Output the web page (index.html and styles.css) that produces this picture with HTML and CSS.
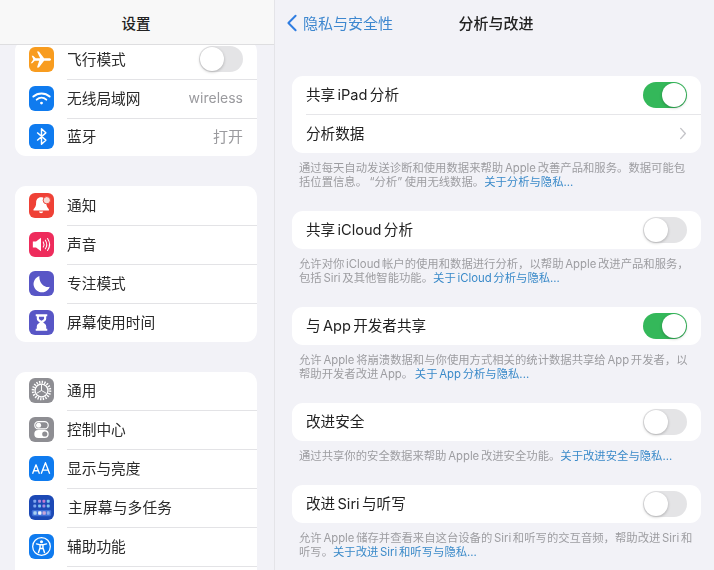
FILE: index.html
```html
<!DOCTYPE html>
<html lang="zh-CN">
<head>
<meta charset="utf-8">
<title>设置</title>
<link rel="stylesheet" href="styles.css">
</head>
<body>
<div class="app">
  <aside class="sidebar">
    <header class="side-head">设置</header>
    <div class="side-scroll">
      <ul class="group">
        <li class="srow"><span class="ico orange"><svg viewBox="0 0 26 26"><path d="M4.500 13l-1.700-4h1.500l2.700 2.700h4.600L8.300 4.800h2l5.400 6.900h5c1.300 0 2.200.6 2.200 1.300s-.9 1.300-2.200 1.300h-5l-5.400 6.900h-2l2.300-6.900H6l-2.700 2.700H1.800z" fill="#fff"/></svg></span><span class="slabel">飞行模式</span><span class="mini-off"><i></i></span></li>
        <li class="srow"><span class="ico blue"><svg viewBox="0 0 26 26" fill="none" stroke="#fff" stroke-linecap="round"><path d="M4.500 11c4.700-4.300 12.300-4.300 17 0" stroke-width="2"/><path d="M8 14.200c2.900-2.600 7.100-2.600 10 0" stroke-width="2"/><circle cx="13" cy="17.800" r="1.500" fill="#fff" stroke="none"/></svg></span><span class="slabel">无线局域网</span><span class="sval">wireless</span></li>
        <li class="srow"><span class="ico blue"><svg viewBox="0 0 26 26" fill="none" stroke="#fff" stroke-width="1.500" stroke-linejoin="round"><path d="M8.500 8.800l9 8-4.500 4.200V5l4.500 4.200-9 8"/></svg></span><span class="slabel">蓝牙</span><span class="sval cjk">打开</span></li>
      </ul>
      <ul class="group">
        <li class="srow"><span class="ico red"><svg viewBox="0 0 26 26"><path d="M12.500 4.500c-3.400 0-5.100 2.600-5.100 5.600 0 3.800-1.200 5-2.700 6.700v1.300h16v-1.300c-1.500-1.700-2.700-2.900-2.700-6.700 0-3-2.100-5.600-5.500-5.600z" fill="#fff"/><path d="M10.300 19.300a2.300 2.300 0 0 0 4.500 0z" fill="#fff"/><circle cx="18.500" cy="7.500" r="3.800" fill="#f7dcd6" stroke="#ef4136"/></svg></span><span class="slabel">通知</span></li>
        <li class="srow"><span class="ico pink"><svg viewBox="0 0 26 26" fill="none" stroke="#fff" stroke-linecap="round" stroke-width="1.100"><path d="M4 10h3.300L12.500 6v14l-5.200-4H4z" fill="#fff" stroke="none"/><path d="M14.800 10.300c1 1.700 1 3.700 0 5.400"/><path d="M17 8.500c1.800 2.800 1.800 6.200 0 9"/><path d="M19.300 6.800c2.600 3.800 2.600 8.600 0 12.400"/></svg></span><span class="slabel">声音</span></li>
        <li class="srow"><span class="ico indigo"><svg viewBox="0 0 26 26"><path d="M10.800 5.200a8.700 8.700 0 1 0 10.800 11.300c-5.600 1.300-11.400-4.300-10.800-11.300z" fill="#fff"/></svg></span><span class="slabel">专注模式</span></li>
        <li class="srow"><span class="ico indigo"><svg viewBox="0 0 26 26"><path d="M7 4.500h12v2h-1.100v2.600c0 2.200-1.900 3-3.200 3.900 1.300.9 3.200 1.700 3.200 3.900v2.600H19v2H7v-2h1.100v-2.600c0-2.200 1.900-3 3.200-3.900-1.300-.9-3.200-1.700-3.200-3.900V6.500H7z" fill="#fff"/><path d="M10.300 7h5.400v1.500c0 1.200-1.600 2-2.700 2.800-1.100-.8-2.700-1.600-2.700-2.800z" fill="#5856c6"/></svg></span><span class="slabel">屏幕使用时间</span></li>
      </ul>
      <ul class="group">
        <li class="srow"><span class="ico gray"><svg viewBox="0 0 26 26" fill="none" stroke="#fff"><circle cx="13" cy="13" r="8.800" stroke-width="2.800" stroke-dasharray="1.400 1.360"/><circle cx="13" cy="13" r="6.700" stroke-width="1.300"/><path d="M13 13V6.800M13 13l-5.200 3M13 13l5.200 3" stroke-width="1"/></svg></span><span class="slabel">通用</span></li>
        <li class="srow"><span class="ico gray"><svg viewBox="0 0 26 26"><rect x="6" y="4.800" width="14" height="7.600" rx="3.800" fill="none" stroke="#fff" stroke-width="1.200"/><circle cx="10" cy="8.600" r="2.600" fill="#fff"/><rect x="5.500" y="13.600" width="15" height="8.200" rx="4.100" fill="#fff"/><circle cx="16.400" cy="17.700" r="2.700" fill="#8e8e93"/></svg></span><span class="slabel">控制中心</span></li>
        <li class="srow"><span class="ico blue"><svg viewBox="0 0 26 26" fill="none" stroke="#fff" stroke-width="1.400" stroke-linejoin="round"><path d="M3.700 18.500l3.600-9.300 3.600 9.300M5 15.300h4.600"/><path d="M12.700 18.500l4.400-11.500 4.400 11.500M14.300 14.700h5.600"/></svg></span><span class="slabel">显示与亮度</span></li>
        <li class="srow"><span class="ico navy"><svg viewBox="0 0 26 26"><g fill="#7ea6ee"><rect x="4.500" y="5" width="3" height="3" rx=".8"/><rect x="4.500" y="10" width="3" height="3" rx=".8"/></g><g fill="#a98be0"><rect x="9.500" y="5" width="3" height="3" rx=".8"/><rect x="14" y="10" width="3" height="3" rx=".8"/></g><g fill="#c37ad0"><rect x="14" y="5" width="3" height="3" rx=".8"/></g><g fill="#7ec4f0"><rect x="18.500" y="5" width="3" height="3" rx=".8"/><rect x="9.500" y="10" width="3" height="3" rx=".8"/><rect x="18.500" y="10" width="3" height="3" rx=".8"/></g><rect x="3" y="15.500" width="20" height="6.500" rx="1.500" fill="#3f6fd8"/><rect x="4.500" y="17" width="3.500" height="3.500" rx=".8" fill="#a9d0f0"/><rect x="9.500" y="17" width="3.500" height="3.500" rx=".8" fill="#f0f4fb"/><rect x="14" y="17" width="3.500" height="3.500" rx=".8" fill="#c9a6d8"/><rect x="18.500" y="17" width="3" height="3.500" rx=".8" fill="#8cb0ee"/></svg></span><span class="slabel wide">主屏幕与多任务</span></li>
        <li class="srow"><span class="ico blue"><svg viewBox="0 0 26 26" fill="none" stroke="#fff"><circle cx="13" cy="13" r="9.200" stroke-width="1.300"/><circle cx="13" cy="8" r="1.600" fill="#fff" stroke="none"/><path d="M7.800 10.300l3.700.9v3l-1.600 5M18.200 10.300l-3.700.9v3l1.600 5M11.500 11.200h3M11.800 15h2.400" stroke-width="1.500" stroke-linecap="round"/></svg></span><span class="slabel">辅助功能</span></li>
        <li class="srow"></li>
      </ul>
    </div>
  </aside>
  <main class="detail">
    <header class="nav">
      <span class="back"><svg class="chev" viewBox="0 0 12 20" fill="none" stroke="#2f7de1" stroke-width="2.200" stroke-linecap="round" stroke-linejoin="round"><path d="M10 2L2 10l8 8"/></svg>隐私与安全性</span>
      <span class="nav-title">分析与改进</span>
    </header>
    <section class="sect first">
      <div class="card">
        <div class="row top"><span>共享 iPad 分析</span><span class="toggle on"><i></i></span></div>
        <div class="row divided"><span>分析数据</span><svg class="more" viewBox="0 0 8 14" fill="none" stroke="#c4c4c8" stroke-width="1.500" stroke-linecap="round" stroke-linejoin="round"><path d="M1.500 1.500L6.500 7l-5 5.500"/></svg></div>
      </div>
      <p class="note">通过每天自动发送诊断和使用数据来帮助 Apple 改善产品和服务。数据可能包括位置信息。<span class="q">“分析”</span>使用无线数据。<a>关于分析与隐私...</a></p>
    </section>
    <section class="sect">
      <div class="card"><div class="row"><span>共享 iCloud 分析</span><span class="toggle"><i></i></span></div></div>
      <p class="note">允许对你 iCloud 帐户的使用和数据进行分析，以帮助 Apple 改进产品和服务，包括 Siri 及其他智能功能。<a>关于 iCloud 分析与隐私...</a></p>
    </section>
    <section class="sect">
      <div class="card"><div class="row"><span>与 App 开发者共享</span><span class="toggle on"><i></i></span></div></div>
      <p class="note">允许 Apple 将崩溃数据和与你使用方式相关的统计数据共享给 App 开发者，以帮助开发者改进 App。 <a>关于 App 分析与隐私...</a></p>
    </section>
    <section class="sect">
      <div class="card"><div class="row"><span>改进安全</span><span class="toggle"><i></i></span></div></div>
      <p class="note">通过共享你的安全数据来帮助 Apple 改进安全功能。<a>关于改进安全与隐私...</a></p>
    </section>
    <section class="sect">
      <div class="card"><div class="row"><span>改进 Siri 与听写</span><span class="toggle"><i></i></span></div></div>
      <p class="note">允许 Apple 储存并查看来自这台设备的 Siri 和听写的交互音频，帮助改进 Siri 和听写。<a>关于改进 Siri 和听写与隐私...</a></p>
    </section>
  </main>
</div>
</body>
</html>
```

FILE: styles.css
```css
* { box-sizing: border-box; }
html, body { margin: 0; height: 100%; }
body {
  font-family: "Inter", "Noto Sans CJK SC", sans-serif;
  color: #222;
  background: #f2f2f7;
  overflow: hidden;
}
.app { display: flex; width: 714px; height: 570px; overflow: hidden; filter: blur(.3px); }

.sidebar {
  width: 275px;
  flex: none;
  height: 570px;
  overflow: hidden;
  background: #f2f2f7;
  border-right: 1px solid #e4e4e8;
}
.side-head {
  position: relative;
  z-index: 1;
  height: 45px;
  padding-right: 2px;
  background: #f8f8f8;
  border-bottom: 1px solid #dedee0;
  display: flex;
  align-items: center;
  justify-content: center;
  font-size: 14.500px;
  font-weight: 500;
  color: #222;
}
.side-scroll { margin-top: -5px; padding: 0 17px 0 15px; }
.group {
  list-style: none;
  margin: 0 0 30px;
  padding: 0;
  background: #fff;
  border-radius: 11px;
  overflow: hidden;
}
.srow {
  position: relative;
  height: 38.800px;
  display: flex;
  align-items: center;
  padding: 0 14px 0 14px;
  font-size: 14.700px;
  color: #2a2a2a;
}
.srow + .srow::before {
  content: "";
  position: absolute;
  left: 52px;
  right: 0;
  top: 0;
  height: 1px;
  background: #e3e3e6;
}
.ico { width: 25px; height: 25px; border-radius: 6px; flex: none; display: block; }
.ico svg { width: 25px; height: 25px; display: block; }
.orange { background: #f89c1f; }
.blue { background: #0f7bef; }
.red { background: #ef4136; }
.pink { background: #ee2c5c; }
.indigo { background: #5856c6; }
.gray { background: #8e8e93; }
.navy { background: #1c49b5; }
.slabel { margin: 0 0 2px 13px; flex: 1; }
.slabel.wide { letter-spacing: .2px; margin-left: 14px; }
.sval { color: #9a9a9e; font-size: 14px; margin-bottom: 2px; }
.sval.cjk { font-size: 15px; }
.mini-off {
  width: 44px; height: 26px; border-radius: 13px;
  background: #e4e4e6; position: relative; flex: none;
}
.mini-off i {
  position: absolute; left: 1px; top: 1px; width: 24px; height: 24px;
  border-radius: 50%; background: #fff; box-shadow: 0 1px 3px rgba(0,0,0,.25);
}

.detail { flex: 1; min-width: 0; padding: 0 13px 0 17px; }
.nav {
  position: relative;
  height: 45px;
  padding-left: 3px;
  display: flex;
  align-items: center;
  justify-content: center;
  margin-left: -17px;
  margin-right: -13px;
}
.back {
  position: absolute;
  left: 11px;
  top: 0;
  height: 47px;
  display: flex;
  align-items: center;
  gap: 5px;
  color: #3d87cf;
  font-size: 15px;
  transform: translateY(-1px);
}
.chev { width: 12px; height: 18px; }
.nav-title { font-size: 15px; font-weight: 500; color: #222; }
.sect { margin-bottom: 22px; }
.sect.first { margin-top: 31px; }
.card { background: #fff; border-radius: 11px; overflow: hidden; }
.row {
  height: 38.500px;
  display: flex;
  align-items: center;
  justify-content: space-between;
  padding: 0 14px;
  font-size: 14.600px;
  line-height: 20px;
  word-spacing: -1.800px;
  color: #222;
}
.row.top { height: 38px; }
.row.divided { position: relative; height: 39px; }
.row.divided::before {
  content: "";
  position: absolute;
  left: 14px; right: 0; top: 0;
  height: 1px;
  background: #e6e6e9;
}
.toggle {
  width: 44px; height: 26px; border-radius: 13px;
  background: #e4e4e6; position: relative; flex: none;
}
.toggle i {
  position: absolute; left: 1px; top: 1px; width: 24px; height: 24px;
  border-radius: 50%; background: #fff; box-shadow: 0 1px 3px rgba(0,0,0,.25);
}
.toggle.on { background: #34b85a; }
.toggle.on i { left: 19px; }
.more { width: 8px; height: 13px; }
.note {
  margin: 7.500px 0 0;
  padding: 0 8px 0 7px;
  font-size: 11.350px;
  line-height: 14px;
  word-spacing: -1.500px;
  color: #9d9da1;
}
.note .q { padding: 0 2.500px; }
.note a { color: #3a8ac9; }
```
